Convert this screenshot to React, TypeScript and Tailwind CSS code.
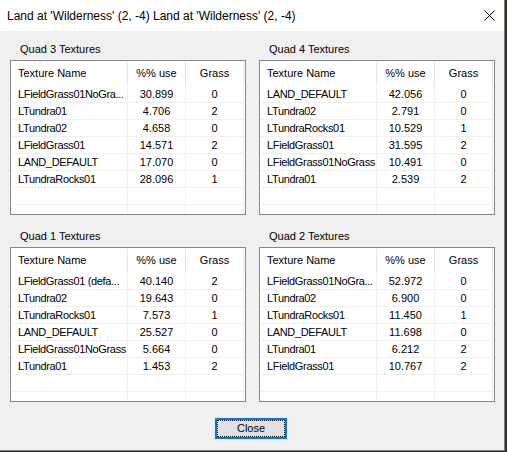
import React from "react";

type Row = [string, string, string];

const quads: { title: string; rows: Row[] }[] = [
  {
    title: "Quad 3 Textures",
    rows: [
      ["LFieldGrass01NoGra...", "30.899", "0"],
      ["LTundra01", "4.706", "2"],
      ["LTundra02", "4.658", "0"],
      ["LFieldGrass01", "14.571", "2"],
      ["LAND_DEFAULT", "17.070", "0"],
      ["LTundraRocks01", "28.096", "1"],
    ],
  },
  {
    title: "Quad 4 Textures",
    rows: [
      ["LAND_DEFAULT", "42.056", "0"],
      ["LTundra02", "2.791", "0"],
      ["LTundraRocks01", "10.529", "1"],
      ["LFieldGrass01", "31.595", "2"],
      ["LFieldGrass01NoGrass", "10.491", "0"],
      ["LTundra01", "2.539", "2"],
    ],
  },
  {
    title: "Quad 1 Textures",
    rows: [
      ["LFieldGrass01 (defa...", "40.140", "2"],
      ["LTundra02", "19.643", "0"],
      ["LTundraRocks01", "7.573", "1"],
      ["LAND_DEFAULT", "25.527", "0"],
      ["LFieldGrass01NoGrass", "5.664", "0"],
      ["LTundra01", "1.453", "2"],
    ],
  },
  {
    title: "Quad 2 Textures",
    rows: [
      ["LFieldGrass01NoGra...", "52.972", "0"],
      ["LTundra02", "6.900", "0"],
      ["LTundraRocks01", "11.450", "1"],
      ["LAND_DEFAULT", "11.698", "0"],
      ["LTundra01", "6.212", "2"],
      ["LFieldGrass01", "10.767", "2"],
    ],
  },
];

function Table({ rows }: { rows: Row[] }) {
  const all: Row[] = [...rows, ["", "", ""], ["", "", ""], ["", "", ""]];
  return (
    <div className="w-[236px] h-[155px] border border-[#828790] bg-white overflow-hidden">
      <div className="flex h-[25px] items-center">
        <div className="w-[117px] h-[23px] flex items-center pl-[7px] border-r border-[#e5e5e5]">
          Texture Name
        </div>
        <div className="w-[58px] h-[23px] flex items-center justify-center border-r border-[#e5e5e5]">
          %% use
        </div>
        <div className="w-[58px] h-[23px] flex items-center justify-center border-r border-[#e5e5e5]">
          Grass
        </div>
      </div>
      {all.map((r, i) => (
        <div key={i} className="flex h-[17px] border-b border-[#f0f0f0]">
          <div className="w-[117px] flex items-center pl-[7px] border-r border-[#f0f0f0] whitespace-nowrap overflow-hidden tracking-[-0.35px]">
            {r[0]}
          </div>
          <div className="w-[58px] flex items-center justify-center border-r border-[#f0f0f0]">
            {r[1]}
          </div>
          <div className="w-[58px] flex items-center justify-center border-r border-[#f0f0f0]">
            {r[2]}
          </div>
        </div>
      ))}
    </div>
  );
}

function Group({ title, rows }: { title: string; rows: Row[] }) {
  return (
    <div className="flex flex-col">
      <div className="h-[13px] leading-[13px] pl-[10px] mb-[4px]">{title}</div>
      <Table rows={rows} />
    </div>
  );
}

export default function App() {
  return (
    <div className="w-[507px] h-[452px] bg-[#2e3229] overflow-hidden">
      <div
        className="w-[505px] h-[451px] bg-[#f0f0f0] border-r border-b border-[#7a7a7a] flex flex-col text-[11px] text-black"
        style={{ fontFamily: '"Liberation Sans", Arial, sans-serif' }}
      >
        <div className="h-[31px] bg-white flex items-center justify-between pl-[7px] pr-[9px] text-[12px] shrink-0">
          <span>Land at 'Wilderness' (2, -4) Land at 'Wilderness' (2, -4)</span>
          <svg width="11" height="11" viewBox="0 0 11 11">
            <path d="M0.5 0.5 L10.5 10.5 M10.5 0.5 L0.5 10.5" stroke="#000" strokeWidth="1" />
          </svg>
        </div>
        <div className="flex flex-col pt-[12px] pl-[10px]">
          <div className="flex gap-[13px]">
            <Group title={quads[0].title} rows={quads[0].rows} />
            <Group title={quads[1].title} rows={quads[1].rows} />
          </div>
          <div className="flex gap-[13px] mt-[15px]">
            <Group title={quads[2].title} rows={quads[2].rows} />
            <Group title={quads[3].title} rows={quads[3].rows} />
          </div>
          <div className="flex mt-[16px] pl-[205px]">
            <button className="w-[72px] h-[21px] border-2 border-[#0078d7] bg-[#e1e1e1] p-0 flex items-stretch">
              <span className="flex-1 border border-dotted border-black flex items-center justify-center">
                Close
              </span>
            </button>
          </div>
        </div>
      </div>
    </div>
  );
}
